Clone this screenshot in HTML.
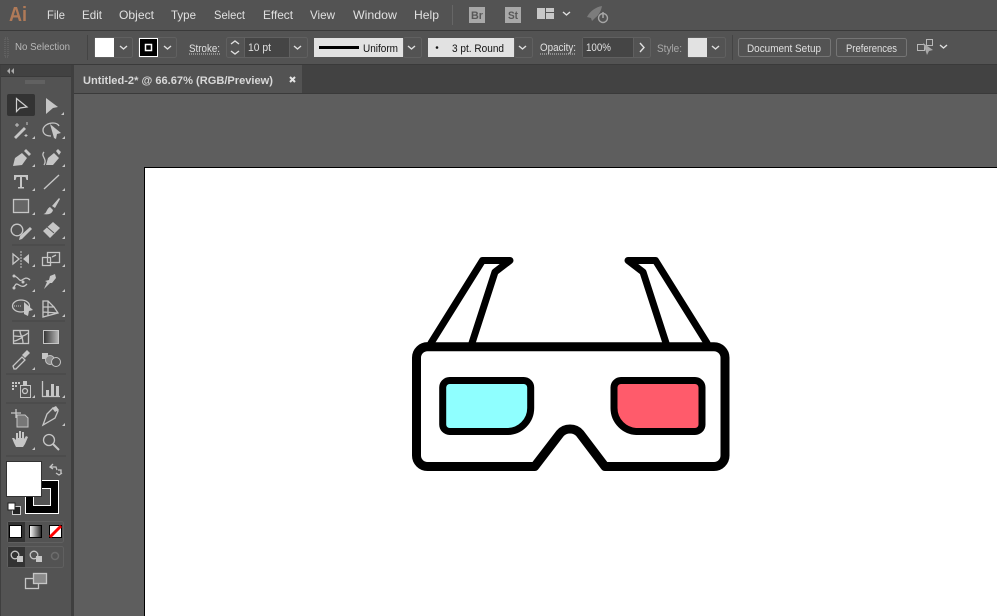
<!DOCTYPE html>
<html><head><meta charset="utf-8"><style>
html,body{margin:0;padding:0;width:997px;height:616px;overflow:hidden;background:#535353}
svg{display:block}
text{font-family:"Liberation Sans",sans-serif;font-size:12px;fill:#e0e0e0}
.i{fill:#c6c6c6;stroke:none}
.s{fill:none;stroke:#c6c6c6;stroke-width:1.300}
.ch{fill:none;stroke:#e0e0e0;stroke-width:1.400}
.b{fill:none;stroke:#606060;stroke-width:1}
</style></head><body>
<svg xmlns="http://www.w3.org/2000/svg" width="997" height="616" viewBox="0 0 997 616">
<rect width="997" height="616" fill="#535353"/>
<!-- bars -->
<rect y="30" width="997" height="1" fill="#3a3a3a"/>
<rect y="64" width="997" height="1" fill="#3a3a3a"/>
<rect x="72" y="65" width="925" height="29" fill="#424242"/>
<rect x="74" y="65" width="228" height="28" fill="#535353"/>
<rect x="74" y="93" width="923" height="1" fill="#3a3a3a"/>
<rect x="74" y="94" width="923" height="522" fill="#5e5e5e"/>
<rect x="71" y="65" width="3" height="551" fill="#3f3f3f"/>
<rect x="0" y="65" width="71" height="11" fill="#424242"/>
<rect x="0" y="76" width="71" height="1" fill="#3a3a3a"/>
<rect x="0" y="65" width="1" height="551" fill="#3f3f3f"/>
<!-- artboard -->
<rect x="144.500" y="167.500" width="860" height="460" fill="#fff" stroke="#000"/>
<!-- menu -->
<text x="9" y="21" style="font-size:20px;font-weight:bold;fill:#b07a58" textLength="18" lengthAdjust="spacingAndGlyphs">Ai</text>
<text x="47" y="19" textLength="18" lengthAdjust="spacingAndGlyphs">File</text>
<text x="82" y="19" textLength="20" lengthAdjust="spacingAndGlyphs">Edit</text>
<text x="119" y="19" textLength="35" lengthAdjust="spacingAndGlyphs">Object</text>
<text x="171" y="19" textLength="25" lengthAdjust="spacingAndGlyphs">Type</text>
<text x="214" y="19" textLength="31" lengthAdjust="spacingAndGlyphs">Select</text>
<text x="263" y="19" textLength="30" lengthAdjust="spacingAndGlyphs">Effect</text>
<text x="310" y="19" textLength="25" lengthAdjust="spacingAndGlyphs">View</text>
<text x="353" y="19" textLength="44" lengthAdjust="spacingAndGlyphs">Window</text>
<text x="414" y="19" textLength="25" lengthAdjust="spacingAndGlyphs">Help</text>
<rect x="452" y="5" width="1" height="20" fill="#666"/>
<rect x="469" y="7" width="16" height="16" fill="#a8a8a8"/>
<text x="471" y="19" style="font-size:11px;font-weight:bold;fill:#585858" textLength="12" lengthAdjust="spacingAndGlyphs">Br</text>
<rect x="505" y="7" width="16" height="16" fill="#a8a8a8"/>
<text x="508" y="19" style="font-size:11px;font-weight:bold;fill:#585858" textLength="10" lengthAdjust="spacingAndGlyphs">St</text>
<path d="M537 8h8v11h-8zM546 8h8v4h-8zM546 13h8v6h-8z" fill="#c8c8c8"/>
<path class="ch" d="M563 12l3.500 3 3.500-3"/>
<path d="M587 17c3-6 9-10 15-11-1 5-3 9-7 12l-3 3-1-3z" fill="#7c7c7c"/>
<circle cx="603" cy="18" r="4.500" fill="none" stroke="#a6a6a6" stroke-width="1.400"/>
<path d="M603 12v6" stroke="#a6a6a6" stroke-width="1.500"/>
<!-- control bar -->
<path d="M5 38h3v19H5z" fill="none" stroke="#6c6c6c" stroke-dasharray="1 1"/>
<text x="15" y="50" style="font-size:10.500px;fill:#b8b8b8" textLength="55" lengthAdjust="spacingAndGlyphs">No Selection</text>
<rect x="87" y="35" width="1" height="25" fill="#444"/>
<rect x="94.500" y="37.500" width="38" height="20" rx="2" class="b"/>
<rect x="95" y="38" width="19" height="19" fill="#fff"/>
<path class="ch" d="M120 46l3.500 3 3.500-3"/>
<rect x="138.500" y="37.500" width="38" height="20" rx="2" class="b"/>
<rect x="139.500" y="38.500" width="18" height="18" fill="#000" stroke="#fff"/>
<rect x="145.500" y="44.500" width="6" height="6" fill="none" stroke="#fff" stroke-width="1.500"/>
<path class="ch" d="M164 46l3.500 3 3.500-3"/>
<text x="189" y="52" style="font-size:11px" textLength="31" lengthAdjust="spacingAndGlyphs">Stroke:</text>
<path d="M189 54h31" stroke="#ccc" stroke-dasharray="1 1"/>
<rect x="226.500" y="37.500" width="81" height="20" rx="2" class="b"/>
<rect x="245" y="38" width="45" height="19" fill="#454545"/>
<path class="ch" d="M231 44l4-3 4 3M231 51l4 3 4-3"/>
<rect x="244" y="38" width="1" height="19" fill="#606060"/>
<rect x="289" y="38" width="1" height="19" fill="#606060"/>
<text x="248" y="51" style="font-size:11px" textLength="23" lengthAdjust="spacingAndGlyphs">10 pt</text>
<path class="ch" d="M294 46l3.500 3 3.500-3"/>
<rect x="314" y="38" width="89" height="19" fill="#e2e2e2"/>
<rect x="319" y="46" width="40" height="3" fill="#000"/>
<text x="363" y="52" style="font-size:11px;fill:#111" textLength="35" lengthAdjust="spacingAndGlyphs">Uniform</text>
<rect x="403.500" y="37.500" width="18" height="20" rx="2" class="b"/>
<path class="ch" d="M408 46l3.500 3 3.500-3"/>
<rect x="428" y="38" width="86" height="19" fill="#e2e2e2"/>
<circle cx="437" cy="47.500" r="1.300" fill="#111"/>
<text x="452" y="52" style="font-size:11px;fill:#111" textLength="52" lengthAdjust="spacingAndGlyphs">3 pt. Round</text>
<rect x="514.500" y="37.500" width="18" height="20" rx="2" class="b"/>
<path class="ch" d="M519 46l3.500 3 3.500-3"/>
<text x="540" y="51" style="font-size:11px" textLength="36" lengthAdjust="spacingAndGlyphs">Opacity:</text>
<path d="M540 54h36" stroke="#ccc" stroke-dasharray="1 1"/>
<rect x="582.500" y="37.500" width="68" height="20" rx="2" class="b"/>
<rect x="583" y="38" width="50" height="19" fill="#454545"/>
<text x="586" y="51" style="font-size:11px" textLength="25" lengthAdjust="spacingAndGlyphs">100%</text>
<rect x="633" y="38" width="1" height="19" fill="#606060"/>
<path class="ch" d="M640 43l4 4.500-4 4.500"/>
<text x="657" y="52" style="font-size:11px;fill:#a8a8a8" textLength="25" lengthAdjust="spacingAndGlyphs">Style:</text>
<rect x="687.500" y="37.500" width="38" height="20" rx="2" class="b"/>
<rect x="688" y="38" width="19" height="19" fill="#e2e2e2"/>
<path class="ch" d="M712 46l3.500 3 3.500-3"/>
<rect x="732" y="35" width="1" height="25" fill="#444"/>
<rect x="738.500" y="38.500" width="92" height="18" rx="2" fill="none" stroke="#757575"/>
<text x="747" y="52" style="font-size:11px" textLength="74" lengthAdjust="spacingAndGlyphs">Document Setup</text>
<rect x="836.500" y="38.500" width="70" height="18" rx="2" fill="none" stroke="#757575"/>
<text x="846" y="52" style="font-size:11px" textLength="51" lengthAdjust="spacingAndGlyphs">Preferences</text>
<g fill="none" stroke="#b8b8b8"><rect x="917.500" y="44.500" width="7" height="6"/><rect x="926.500" y="39.500" width="6" height="6"/></g>
<path d="M923 43l10 7-4 1-2 4z" fill="#a8a8a8"/>
<path class="ch" d="M940 45l3.500 3 3.500-3"/>
<!-- tab -->
<text x="83" y="84" style="font-size:11px;font-weight:bold;fill:#d8d8d8" textLength="190" lengthAdjust="spacingAndGlyphs">Untitled-2* @ 66.67% (RGB/Preview)</text>
<path d="M290 77l5 5M295 77l-5 5" stroke="#e4e4e4" stroke-width="2"/>
<path d="M10 68l-3 3 3 3zM14 68l-3 3 3 3z" fill="#aaa"/>
<path d="M26 80v4M28 80v4M30 80v4M32 80v4M34 80v4M36 80v4M38 80v4M40 80v4M42 80v4M44 80v4" stroke="#777" stroke-width="0.800"/>
<!-- tools -->
<rect x="7" y="94" width="28" height="22" rx="2" fill="#333"/>
<path d="M16.500 98.500v13l3.500-3.500 7-1z" fill="none" stroke="#d0d0d0" stroke-width="1.200"/>
<path class="i" d="M46 98l12 9-5 1-7 6z"/>
<path class="i" d="M61 115l3-3v3zM32 139l3-3v3zM62 139l3-3v3zM32 167l3-3v3zM62 167l3-3v3zM32 191l3-3v3zM62 191l3-3v3zM32 215l3-3v3zM62 215l3-3v3zM32 239l3-3v3zM62 239l3-3v3zM32 267l3-3v3zM62 267l3-3v3zM32 292l3-3v3zM62 292l3-3v3zM32 317l3-3v3zM62 317l3-3v3zM32 370l3-3v3zM32 398l3-3v3zM62 398l3-3v3zM62 426l3-3v3zM32 450l3-3v3z"/>
<!-- wand, lasso -->
<path d="M14 137l10-10 2 2-10 10z" class="i"/>
<path d="M17 123v4M15 125h4M27 122v3M26 134v3M24.500 135.500h3" stroke="#c6c6c6"/>
<path class="s" d="M51 136c-6 0-8-3-8-6 0-4 5-7 10-7 3 0 5 1 6 3"/>
<path class="i" d="M50 124l11 9-4 1-1 5-2-1z"/>
<!-- pen -->
<path class="i" d="M13 166l2-8 7-5 5 5-5 7zM24 151l2-2 5 5-2 2z"/>
<path class="i" d="M46 165l2-7 6-5 5 5-6 7zM56 151l2-2 3 3-2 3z"/>
<path class="s" d="M44 152c-4 4 4 7 0 13"/>
<!-- type, line -->
<path class="i" d="M14 175h14v5h-1.500l-1-3H22v10h2v1.500h-6V187h2v-10h-3.500l-1 3H14z"/>
<path d="M44 189l15-14" stroke="#c6c6c6" stroke-width="1.400"/>
<!-- rect, brush -->
<rect x="13.500" y="199.500" width="15" height="13" fill="#666" stroke="#c6c6c6" stroke-width="1.300"/>
<path class="i" d="M52 206l7-8 1 1-5 9zM43 214c4 0 3-5 7-7l3 3c-1 4-5 5-10 4z"/>
<!-- shaper, eraser -->
<circle cx="17" cy="230" r="5.800" class="s"/>
<path class="i" d="M20 236l10-9 2 2-10 10-3 1z"/>
<path class="i" d="M43 231l10-9 7 6-10 10z"/>
<path d="M47 227l7 6" stroke="#535353"/>
<path d="M12 245h53" stroke="#444"/>
<!-- reflect, scale -->
<path class="s" d="M13 254l6 5-6 5z"/>
<path class="i" d="M29 254l-6 5 6 5z"/>
<path d="M21 251v17" stroke="#c6c6c6" stroke-dasharray="2 1"/>
<path class="s" d="M42.500 257.500h8v8h-8zM47.500 252.500h12v10h-12zM52 257l4-2"/>
<!-- warp, pin -->
<path class="s" d="M14 276c5 1 5 6 8 4 3-2 5-3 8 0"/><path class="s" d="M14 287c2-3 2-4 5-2s5 2 8-1"/>
<circle cx="14" cy="276" r="1.500" class="i"/><circle cx="23" cy="282" r="1.500" class="i"/><circle cx="14" cy="288" r="1.500" class="i"/>
<path class="i" d="M50 276l5-2 1 4-4 5-2 0-6 6 3-7-2-1 4-1z"/>
<!-- shape builder, perspective -->
<ellipse cx="21" cy="306" rx="8.500" ry="6" class="s"/><path d="M14 306h8" stroke="#c6c6c6" stroke-dasharray="1 1"/>
<path class="i" d="M24 302l9 8-4 1-1 5-4-2z"/>
<path class="s" d="M43 301v16l15-4-4-6-6-6zM43 307l11 0M43 312l15 1M48 301v15"/>
<path d="M12 321h53" stroke="#444"/>
<!-- mesh, gradient -->
<rect x="13.500" y="330.500" width="15" height="13" fill="none" stroke="#c6c6c6" stroke-width="1.300"/>
<path class="s" d="M14 336c5 0 8 2 14-3M20 331c0 4 3 6 3 12M14 341c3 0 5-2 9-4"/>
<defs><linearGradient id="g"><stop offset="0" stop-color="#333"/><stop offset="1" stop-color="#b8b8b8"/></linearGradient><linearGradient id="g2"><stop offset="0" stop-color="#fff"/><stop offset="1" stop-color="#222"/></linearGradient></defs>
<rect x="43.500" y="330.500" width="15" height="13" fill="url(#g)" stroke="#c6c6c6"/>
<!-- eyedropper, blend -->
<path class="s" d="M14 369l-1-3 9-9 3 3-9 9z"/>
<path class="i" d="M22 355l5-5 3 3-5 5z"/>
<rect x="42" y="353" width="6" height="6" class="i"/><circle cx="50" cy="360" r="4.500" fill="#8a8a8a" stroke="#c6c6c6"/><circle cx="56" cy="362" r="4.500" fill="#535353" stroke="#c6c6c6"/>
<path d="M6 374h60" stroke="#444"/>
<!-- symbol, graph -->
<path class="i" d="M12 382h2v2h-2zM15 382h2v2h-2zM18 382h2v2h-2zM12 385h2v2h-2zM15 385h2v2h-2zM12 388h2v2h-2z"/>
<rect x="20.500" y="385.500" width="10" height="12" fill="none" stroke="#c6c6c6"/><circle cx="25" cy="391" r="2.500" class="s"/><path class="i" d="M23 381h4v4h-4z"/>
<path class="s" d="M42.500 381v15.500H60"/>
<path class="i" d="M46 390h3v6h-3zM51 384h3v12h-3zM56 386h3v10h-3z"/>
<path d="M6 403h60" stroke="#444"/>
<!-- artboard, slice -->
<path class="s" d="M11 413h10M16 409v9"/>
<path d="M17 415h8l3 3v9H17z" fill="#777" stroke="#c6c6c6"/>
<path class="s" d="M43 425l4-11 6-6 5 3-3 7z"/><path class="i" d="M52 408l4-2 3 4-4 2z"/>
<!-- hand, zoom -->
<path class="i" d="M14 443l-2-5 2 0 2 2v-7h2v5h1v-7h2v7h1v-6h2v7l2-3 2 1-3 7-2 3h-7z"/>
<circle cx="49" cy="440" r="5.500" class="s"/><path d="M53 444l6 6" stroke="#c6c6c6" stroke-width="2"/>
<path d="M6 456h60" stroke="#444"/>
<!-- fill/stroke -->
<rect x="25.500" y="480.500" width="33" height="33" fill="#000" stroke="#fff"/>
<rect x="33.500" y="488.500" width="17" height="17" fill="#535353" stroke="#fff"/>
<rect x="6.500" y="461.500" width="35" height="35" fill="#fff" stroke="#333"/>
<path d="M51 467h5l1 3M53 464l-3 3 3 2M61 472v-1M58 470h3v4M56 473l3 2 3-2" fill="none" stroke="#c6c6c6" stroke-width="1.300"/>
<rect x="12.500" y="506.500" width="8" height="8" fill="#222" stroke="#ccc"/>
<rect x="8" y="503" width="7" height="7" fill="#fff" stroke="#222"/>
<!-- color modes -->
<rect x="7.500" y="521.500" width="56" height="21" rx="2" class="b"/>
<rect x="8" y="522" width="17" height="20" fill="#333"/>
<rect x="9.500" y="525.500" width="12" height="12" fill="#fff" stroke="#000"/>
<rect x="29.500" y="525.500" width="12" height="12" fill="url(#g2)" stroke="#000"/>
<rect x="49.500" y="525.500" width="12" height="12" fill="#fff" stroke="#000"/>
<path d="M50 537l11-11" stroke="#f00" stroke-width="3"/>
<!-- draw modes -->
<rect x="7.500" y="546.500" width="56" height="21" rx="2" class="b"/>
<rect x="8" y="547" width="17" height="20" fill="#333"/>
<circle cx="15" cy="555" r="3.800" class="s"/><rect x="17" y="556" width="6" height="6" class="i"/>
<circle cx="34" cy="555" r="3.800" class="s"/><rect x="36" y="556" width="6" height="6" class="i"/>
<circle cx="55" cy="556" r="3.500" fill="none" stroke="#6c6c6c" stroke-width="1.500"/>
<!-- screen mode -->
<rect x="25.500" y="578.500" width="13" height="10" fill="none" stroke="#c6c6c6" stroke-width="1.300"/>
<rect x="33.500" y="573.500" width="13" height="10" fill="#8a8a8a" stroke="#c6c6c6" stroke-width="1.300"/>
<!-- glasses -->
<g fill="none" stroke="#000" stroke-linejoin="round" stroke-linecap="round">
<path stroke-width="7" d="M431 343L482.500 260.500H510L495 272L472 343"/>
<path stroke-width="7" d="M707 343L655.500 260.500H628L643 272L666 343"/>
<path fill="#fff" stroke-width="9" d="M428 346.700H714a11 11 0 0 1 11 11V455.500a11 11 0 0 1-11 11H605L580 433.500c-5-6-15-6-20 0L534.700 466.500H427.500a11 11 0 0 1-11-11V357.700a11 11 0 0 1 11.500-11z"/>
<path fill="#8fffff" stroke-width="7" d="M449.700 380.500H523.700a7 7 0 0 1 7 7V408a23.500 23.500 0 0 1-23.500 23.500H449.700a7 7 0 0 1-7-7V387.500a7 7 0 0 1 7-7z"/>
<path fill="#ff5b6b" stroke-width="7" d="M621 380.500H695a7 7 0 0 1 7 7V424.500a7 7 0 0 1-7 7H637.500a23.500 23.500 0 0 1-23.500-23.500V387.500a7 7 0 0 1 7-7z"/>
</g>
</svg>
</body></html>
